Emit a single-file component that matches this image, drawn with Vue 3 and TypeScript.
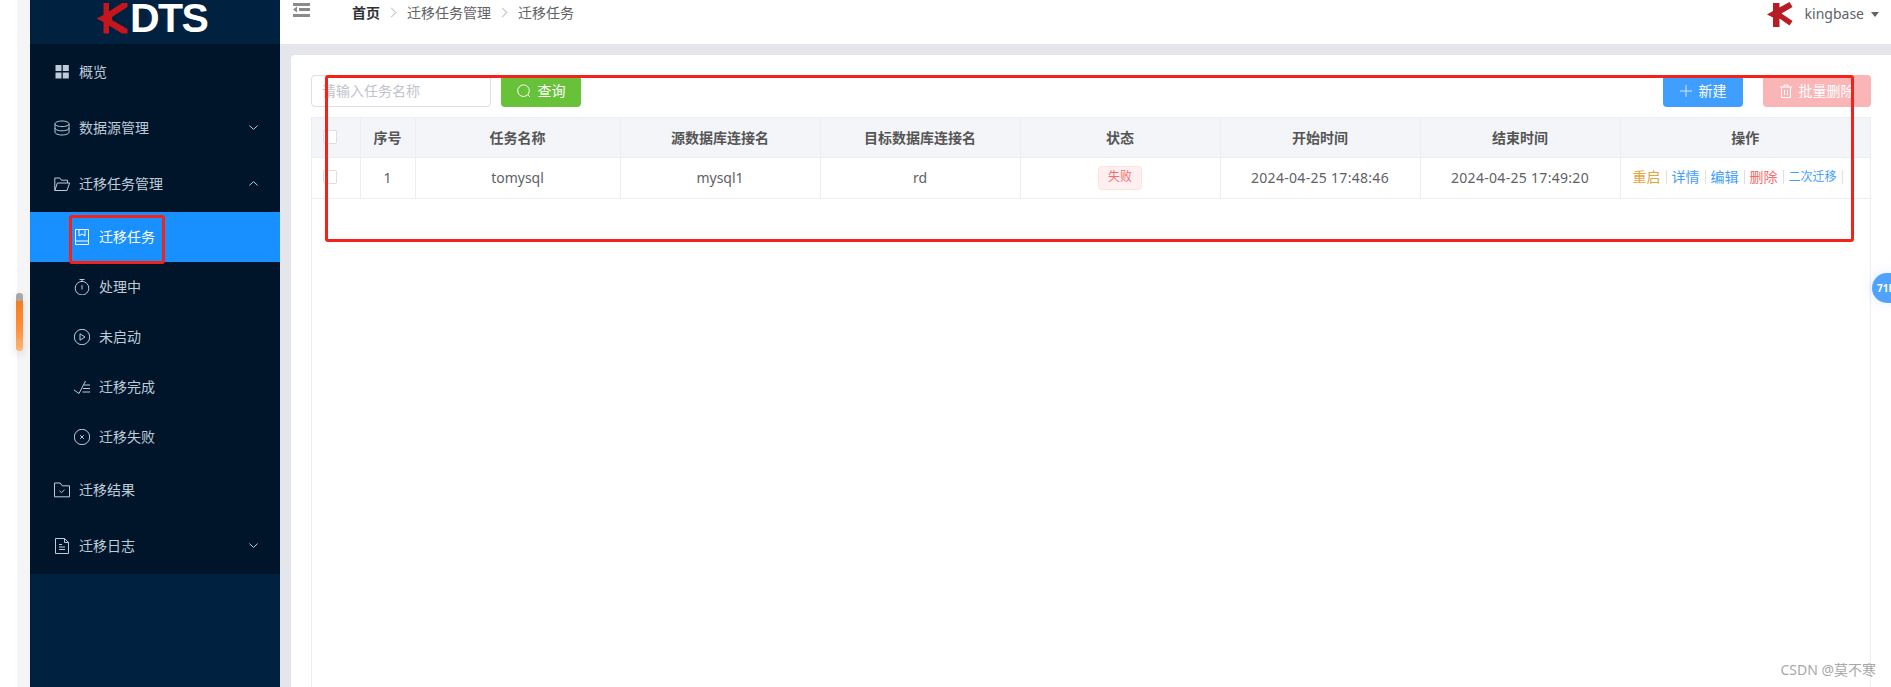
<script setup lang="ts">
interface MenuItem {
  label: string
  icon: string[]
  filled?: boolean
  arrow?: 'up' | 'down'
  sub?: boolean
  active?: boolean
}

const menu: MenuItem[] = [
  { label: '概览', filled: true, icon: ['M1.500 1h6v6h-6z', 'M8.800 1h6v6h-6z', 'M1.500 8.500h6v6h-6z', 'M8.800 8.500h6v6h-6z'] },
  { label: '数据源管理', arrow: 'down', icon: ['M1 3.800C1 2.200 4.200 1 8 1s7 1.200 7 2.800-3.200 2.800-7 2.800-7-1.200-7-2.800z', 'M1 3.800v8.400C1 13.800 4.200 15 8 15s7-1.200 7-2.800V3.800', 'M1 8c0 1.600 3.200 2.800 7 2.800s7-1.200 7-2.800'] },
  { label: '迁移任务管理', arrow: 'up', icon: ['M.8 14.500V2h5l1.500 2.200H13.500v2.800', 'M.8 14.500 3.400 7h12.200L13 14.500z'] },
  { label: '迁移任务', sub: true, active: true, icon: ['M1.500 .5h13v15h-13z', 'M1.500 12h13', 'M5 .5v6.500l3-2 3 2V.5'] },
  { label: '处理中', sub: true, icon: ['M8 16A6.800 6.800 0 1 0 8 2.400 6.800 6.800 0 0 0 8 16z', 'M5.500 .5h5', 'M8 .5v2', 'M8 6v4.500'] },
  { label: '未启动', sub: true, icon: ['M8 15.700A7.700 7.700 0 1 0 8 .3a7.700 7.700 0 0 0 0 15.400z', 'M6 4.800l5 3.200-5 3.200z'] },
  { label: '迁移完成', sub: true, icon: ['M0 11l5 3.500L11.500 2', 'M10 6h6', 'M9 9.500h7', 'M8.500 13h7.500'] },
  { label: '迁移失败', sub: true, icon: ['M8 15.700A7.700 7.700 0 1 0 8 .3a7.700 7.700 0 0 0 0 15.400z', 'M6.200 6.200l3.600 3.600', 'M9.800 6.200l-3.600 3.600'] },
  { label: '迁移结果', icon: ['M.5 14.800V1h5.700l2 2.800h7.300v11z', 'M5.500 8.800l2 1.800 3-2.800'] },
  { label: '迁移日志', arrow: 'down', icon: ['M1.500 .5h9l4 4v11h-13z', 'M10.500 .5v4h4', 'M5 6.500h3', 'M5 9h6', 'M5 11.500h6'] },
]

const columns = ['序号', '任务名称', '源数据库连接名', '目标数据库连接名', '状态', '开始时间', '结束时间', '操作']
const widths = [48, 55, 205, 200, 200, 200, 200, 200, 250]

const actions = [
  { label: '重启', tone: 'warn' },
  { label: '详情', tone: 'info' },
  { label: '编辑', tone: 'info' },
  { label: '删除', tone: 'danger' },
  { label: '二次迁移', tone: 'info small' },
]
</script>

<template>
  <div class="page">
    <div class="strip"></div>

    <aside class="sidebar">
      <div class="logo">
        <svg class="logo-k" width="34" height="36" viewBox="0 0 34 36">
          <path fill="#c4161c" d="M.5 18.500 7.500 15V3H13v8.500L26 3h5.500v4L16 17v3l15.500 9v4.500H26L13 25.500v8H7.500V22z" />
        </svg>
        <span class="logo-text">DTS</span>
      </div>
      <nav class="menu">
        <div
          v-for="item in menu"
          :key="item.label"
          class="menu-item"
          :class="{ sub: item.sub, active: item.active }"
        >
          <svg class="menu-icon" width="16" height="16" viewBox="0 0 16 16">
            <path
              v-for="d in item.icon"
              :key="d"
              :d="d"
              :fill="item.filled ? 'currentColor' : 'none'"
              :stroke="item.filled ? 'none' : 'currentColor'"
              stroke-width="1"
            />
          </svg>
          <span class="menu-label">{{ item.label }}</span>
          <svg v-if="item.arrow" class="chevron" width="9" height="5" viewBox="0 0 9 5">
            <path :d="item.arrow === 'down' ? 'M.4 .6 4.500 4.400 8.600 .6' : 'M.4 4.400 4.500 .6 8.600 4.400'" fill="none" stroke="currentColor" stroke-width="1" />
          </svg>
        </div>
      </nav>
    </aside>

    <main class="main">
      <header class="topbar">
        <svg class="hamburger" width="17" height="14" viewBox="0 0 17 14">
          <path fill="#8a8a8a" d="M0 0h17v3H0zM6 5h11v3H6zM0 11h17v3H0zM0 6.500 4 3.500v6z" />
        </svg>
        <div class="crumbs">
          <span class="crumb-home">首页</span>
          <span class="crumb-sep"></span>
          <span>迁移任务管理</span>
          <span class="crumb-sep"></span>
          <span>迁移任务</span>
        </div>
        <div class="user">
          <svg width="26" height="25" viewBox="0 0 26 25">
            <path fill="#b81c25" d="M0 12.500 6 9V1h6.500v4.500L22.500 0 25.500 5 14.500 11.500 25.500 19l-3 4.500-10-7V25H6V15.500z" />
          </svg>
          <span class="user-name">kingbase</span>
          <span class="caret"></span>
        </div>
      </header>

      <section class="content">
        <div class="card">
          <div class="toolbar">
            <input class="search" type="text" placeholder="请输入任务名称" />
            <button class="btn green">
              <svg width="14" height="14" viewBox="0 0 14 14"><path d="M6.500 12.500a5.800 5.800 0 1 0 0-11.600 5.800 5.800 0 0 0 0 11.600zM10.800 10.800 13 13" fill="none" stroke="currentColor" /></svg>
              <span class="btn-text">查询</span>
            </button>
            <div class="spacer"></div>
            <button class="btn blue">
              <svg width="12" height="12" viewBox="0 0 12 12"><path d="M6 0v12M0 6h12" fill="none" stroke="#cfe6ff" /></svg>
              <span class="btn-text">新建</span>
            </button>
            <button class="btn pink">
              <svg width="12" height="14" viewBox="0 0 12 14"><path d="M0 3h12M4 3V1h4v2M1.500 3v10.500h9V3M4.500 6v5M7.500 6v5" fill="none" stroke="currentColor" /></svg>
              <span class="btn-text">批量删除</span>
            </button>
          </div>

          <div class="table-wrap">
            <table class="table">
              <colgroup>
                <col v-for="(w, i) in widths" :key="i" :style="{ width: w + 'px' }" />
              </colgroup>
              <thead>
                <tr>
                  <th><span class="check"></span></th>
                  <th v-for="c in columns" :key="c">{{ c }}</th>
                </tr>
              </thead>
              <tbody>
                <tr>
                  <td><span class="check"></span></td>
                  <td>1</td>
                  <td>tomysql</td>
                  <td>mysql1</td>
                  <td>rd</td>
                  <td class="tag-cell"><span class="tag">失败</span></td>
                  <td class="time">2024-04-25 17:48:46</td>
                  <td class="time">2024-04-25 17:49:20</td>
                  <td>
                    <div class="actions">
                      <span v-for="a in actions" :key="a.label" class="action" :class="a.tone">{{ a.label }}</span>
                    </div>
                  </td>
                </tr>
              </tbody>
            </table>
          </div>
        </div>
      </section>
    </main>

    <!-- items lying over the page -->
    <div class="mark mark-large"></div>
    <div class="mark mark-small"></div>
    <div class="scroll-handle"></div>
    <div class="float-badge">71M</div>
    <div class="watermark">CSDN @莫不寒</div>
  </div>
</template>

<style scoped>
.page {
  position: relative;
  display: flex;
  width: 1891px;
  height: 687px;
  overflow: hidden;
  background: #fff;
  font-family: "Noto Sans", "Noto Sans CJK SC", sans-serif;
  font-size: 14px;
  color: #606266;
}
.strip {
  flex: none;
  width: 13px;
  margin-left: 17px;
  background: #f5f5f5;
}
.sidebar {
  flex: none;
  display: flex;
  flex-direction: column;
  width: 250px;
  background: #00213f;
}
.logo {
  flex: none;
  height: 44px;
  display: flex;
  align-items: flex-start;
  padding-left: 66px;
  overflow: hidden;
}
.logo-k {
  flex: none;
}
.logo-text {
  margin-top: -5px;
  font-family: "Liberation Sans", sans-serif;
  font-weight: 700;
  font-size: 41px;
  line-height: 46px;
  letter-spacing: -1.6px;
  color: #fff;
}
.menu {
  background: #001529;
  color: #bfcbd9;
}
.menu-item {
  display: flex;
  align-items: center;
  height: 56px;
  padding-left: 24px;
}
.menu-item.sub {
  height: 50px;
  padding-left: 44px;
}
.menu-item.active {
  background: #1890ff;
  color: #fff;
}
.menu-icon {
  flex: none;
  margin-right: 9px;
}
.menu-label {
  flex: 1;
  padding-bottom: 2px;
  white-space: nowrap;
}
.chevron {
  flex: none;
  margin-right: 22px;
  margin-top: -2px;
}
.main {
  flex: 1;
  display: flex;
  flex-direction: column;
  min-width: 0;
}
.topbar {
  flex: none;
  display: flex;
  align-items: flex-start;
  height: 44px;
  padding: 3px 12px 0 13px;
  box-sizing: border-box;
}
.hamburger {
  flex: none;
}
.crumbs {
  display: flex;
  align-items: center;
  margin-left: 42px;
  margin-top: -4px;
  height: 26px;
  color: #606266;
}
.crumb-home {
  font-weight: 700;
  color: #303133;
}
.crumb-sep {
  width: 6px;
  height: 6px;
  margin: 0 12px 0 8px;
  border-top: 1px solid #c0c4cc;
  border-right: 1px solid #c0c4cc;
  transform: rotate(45deg);
}
.user {
  display: flex;
  align-items: center;
  margin-left: auto;
  margin-top: -1px;
  height: 25px;
}
.user-name {
  margin-left: 12px;
  padding-bottom: 2px;
  color: #606266;
}
.caret {
  margin-left: 7px;
  border-left: 4px solid transparent;
  border-right: 4px solid transparent;
  border-top: 5px solid #606266;
}
.content {
  flex: 1;
  min-height: 0;
  padding: 11px 0 0 11px;
  background: #e4e6eb;
}
.card {
  display: flex;
  flex-direction: column;
  height: 100%;
  padding: 20px 20px 0;
  box-sizing: border-box;
  background: #fff;
  border-radius: 4px 0 0 0;
}
.toolbar {
  flex: none;
  display: flex;
  align-items: center;
  height: 32px;
  margin-bottom: 10px;
}
.search {
  width: 180px;
  height: 32px;
  padding: 0 10px 2px;
  box-sizing: border-box;
  border: 1px solid #dcdfe6;
  border-radius: 4px;
  background: #fff;
  font: inherit;
  outline: none;
}
.search::placeholder {
  color: #c0c4cc;
}
.spacer {
  flex: 1;
}
.btn {
  display: flex;
  align-items: center;
  justify-content: center;
  gap: 7px;
  height: 32px;
  padding: 0;
  border: none;
  border-radius: 4px;
  color: #fff;
  font: inherit;
}
.btn-text {
  padding-bottom: 2px;
}
.green {
  width: 80px;
  margin-left: 10px;
  background: #67c23a;
}
.blue {
  width: 80px;
  background: #409eff;
}
.pink {
  width: 108px;
  margin-left: 20px;
  background: #fab6b6;
}
.table-wrap {
  flex: 1;
  min-height: 0;
  border-left: 1px solid #ebeef5;
  border-right: 1px solid #ebeef5;
  box-sizing: border-box;
}
.table {
  width: 100%;
  table-layout: fixed;
  border-collapse: collapse;
}
.table th,
.table td {
  padding: 0 0 2px;
  text-align: center;
  border-top: 1px solid #ebeef5;
  border-bottom: 1px solid #ebeef5;
  border-left: 1px solid #ebeef5;
  white-space: nowrap;
}
.table th:first-child,
.table td:first-child {
  border-left: none;
}
.table th {
  height: 37px;
  background: #f4f5f9;
  font-weight: 700;
  color: #555;
}
.table td {
  height: 38px;
}
.table td.tag-cell {
  padding: 0;
  height: 40px;
}
.time {
  letter-spacing: 0.3px;
}
.check {
  display: block;
  width: 12px;
  height: 12px;
  margin-left: 11px;
  border: 1px solid #dcdfe6;
  border-radius: 2px;
  background: #fff;
}
.tag {
  display: inline-block;
  height: 24px;
  padding: 0 9px;
  box-sizing: border-box;
  border: 1px solid #fde2e2;
  border-radius: 4px;
  background: #fef0f0;
  color: #f56c6c;
  font-size: 12px;
  line-height: 20px;
  vertical-align: middle;
}
.actions {
  display: flex;
  align-items: center;
  justify-content: flex-start;
  padding-left: 12px;
}
.action {
  height: 14px;
  line-height: 14px;
  padding-right: 5px;
  margin-right: 5px;
  border-right: 1px solid #dcdfe6;
}
.warn {
  color: #e6a23c;
}
.info {
  color: #409eff;
}
.danger {
  color: #f56c6c;
}
.small {
  font-size: 12px;
}
.mark {
  position: absolute;
  box-sizing: border-box;
  border: 3px solid #f5221b;
  border-radius: 3px;
  pointer-events: none;
}
.mark-large {
  left: 325px;
  top: 75px;
  width: 1529px;
  height: 167px;
}
.mark-small {
  left: 69px;
  top: 215px;
  width: 96px;
  height: 49px;
}
.scroll-handle {
  position: absolute;
  left: 16px;
  top: 293px;
  width: 7px;
  height: 58px;
  border-radius: 3px;
  background: linear-gradient(#a8a8a8 0, #a8a8a8 8px, #f47c20 8px, #ff8f3a 36px, #ffb878 100%);
  box-shadow: 0 4px 10px rgba(0, 0, 0, 0.12);
}
.float-badge {
  position: absolute;
  left: 1872px;
  top: 273px;
  width: 32px;
  height: 30px;
  padding-left: 5px;
  box-sizing: border-box;
  border-radius: 15px;
  background: #4fa3ff;
  box-shadow: 0 0 12px rgba(64, 120, 255, 0.15);
  color: #fff;
  font-size: 10px;
  font-weight: 700;
  line-height: 30px;
}
.watermark {
  position: absolute;
  right: 15px;
  top: 660px;
  font-size: 14px;
  line-height: 20px;
  color: #a8a8a8;
}
</style>

<style>
html,
body {
  margin: 0;
  overflow: hidden;
}
</style>
